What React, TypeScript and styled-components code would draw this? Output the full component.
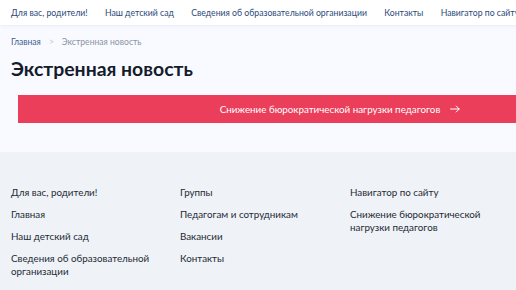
import React from 'react';
import styled, { createGlobalStyle } from 'styled-components';

const GlobalStyle = createGlobalStyle`
    html, body {
        margin: 0;
        padding: 0;
        background: #f8faff;
        font-family: Lato, 'Open Sans', sans-serif;
        overflow: hidden;
    }
`;

const Page = styled.div`
    width: 680px;
    min-height: 290px;
    display: flex;
    flex-direction: column;
`;

const TopNav = styled.nav`
    height: 25px;
    background: #ffffff;
    box-shadow: 0 1px 4px rgba(40, 60, 110, 0.08);
    display: flex;
    align-items: center;
    gap: 17.3px;
    padding: 0 11px;
    white-space: nowrap;
`;

const NavLink = styled.a`
    font-size: 8.7px;
    color: #2c4a7a;
    text-decoration: none;
`;

const Content = styled.main`
    padding: 12px 18px 0 11px;
    height: 115px;
`;

const Crumbs = styled.div`
    display: flex;
    align-items: center;
    gap: 6px;
    font-size: 8.6px;
    color: #8a94a6;
    & a {
        color: #3d5f94;
        text-decoration: none;
    }
`;

const CrumbSep = styled.span`
    color: #c2c9d6;
    font-size: 8.6px;
    padding: 0 2px;
`;

const Title = styled.h1`
    margin: 10px 0 0;
    font-size: 19.4px;
    font-weight: 700;
    color: #141c2c;
`;

const Banner = styled.a`
    margin: 15px 0 0 7px;
    height: 28px;
    background: #ea3e5a;
    color: #ffffff;
    display: flex;
    align-items: center;
    justify-content: center;
    gap: 10px;
    font-size: 9.8px;
    text-decoration: none;
`;

const Footer = styled.footer`
    flex: 1;
    background: #eff3f8;
    padding: 34px 11px 0;
    display: grid;
    grid-template-columns: 169px 170px 170px;
`;

const FooterCol = styled.ul`
    list-style: none;
    margin: 0;
    padding: 0;
    display: flex;
    flex-direction: column;
    gap: 9px;
`;

const FooterLink = styled.li`
    font-size: 9.8px;
    line-height: 13px;
    color: #252a33;
    padding-right: 12px;
`;

const columns = [
    ['Для вас, родители!', 'Главная', 'Наш детский сад', 'Сведения об образовательной организации'],
    ['Группы', 'Педагогам и сотрудникам', 'Вакансии', 'Контакты'],
    ['Навигатор по сайту', 'Снижение бюрократической нагрузки педагогов'],
];

const App: React.FC = () => {
    return (
        <Page>
            <GlobalStyle />
            <TopNav>
                <NavLink>Для вас, родители!</NavLink>
                <NavLink>Наш детский сад</NavLink>
                <NavLink>Сведения об образовательной организации</NavLink>
                <NavLink>Контакты</NavLink>
                <NavLink>Навигатор по сайту</NavLink>
            </TopNav>
            <Content>
                <Crumbs>
                    <a>Главная</a>
                    <CrumbSep>&gt;</CrumbSep>
                    <span>Экстренная новость</span>
                </Crumbs>
                <Title>Экстренная новость</Title>
                <Banner>
                    Снижение бюрократической нагрузки педагогов
                    <svg width="10" height="8" viewBox="0 0 10 8" fill="none">
                        <path d="M0.5 4H9.2M6.2 1L9.2 4L6.2 7" stroke="#fff" strokeWidth="1" strokeLinecap="round" strokeLinejoin="round" />
                    </svg>
                </Banner>
            </Content>
            <Footer>
                {columns.map((col, i) => (
                    <FooterCol key={i}>
                        {col.map((item) => (
                            <FooterLink key={item}>{item}</FooterLink>
                        ))}
                    </FooterCol>
                ))}
            </Footer>
        </Page>
    );
};

export default App;
